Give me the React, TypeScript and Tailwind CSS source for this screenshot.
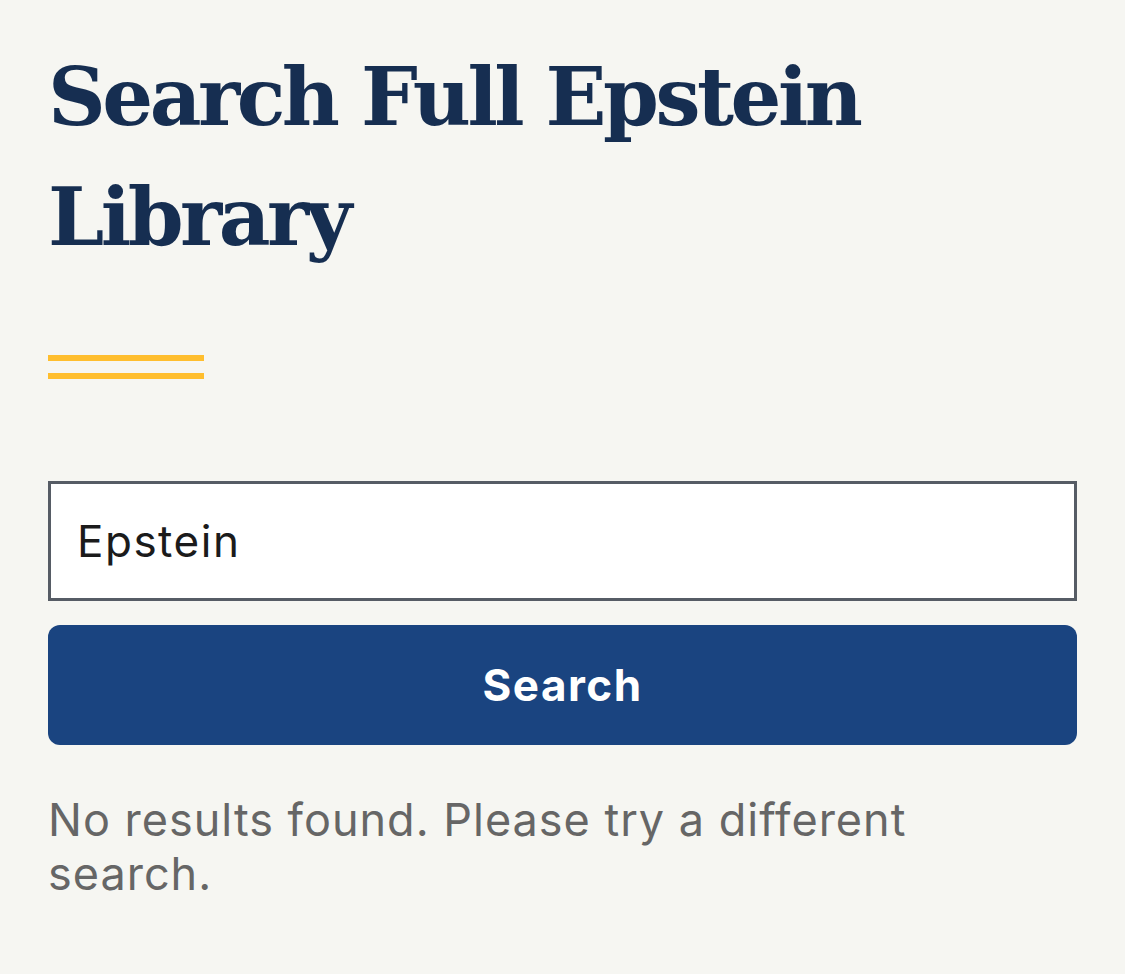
export default function App() {
  return (
    <div className="min-h-[974px] w-full bg-[#f6f6f2] px-[48px] pt-[37px]">
      <h1 className="font-['DejaVu_Serif',serif] text-[80px] font-bold leading-[120px] tracking-[-3.5px] text-[#162e51]">
        Search Full Epstein Library
      </h1>
      <div className="mt-[78px] flex w-[156px] flex-col gap-[12px]">
        <div className="h-[6px] bg-[#ffbe2e]" />
        <div className="h-[6px] bg-[#ffbe2e]" />
      </div>
      <form className="mt-[102px] flex flex-col gap-[24px]" onSubmit={(e) => e.preventDefault()}>
        <input
          type="text"
          defaultValue="Epstein"
          className="h-[120px] w-full border-[3px] border-[#565c65] bg-white px-[26px] font-['Inter',sans-serif] text-[44px] tracking-[1.5px] text-[#1b1b1b] outline-none"
        />
        <button
          type="submit"
          className="h-[120px] w-full rounded-[12px] bg-[#1a4480] font-['Inter',sans-serif] text-[44px] font-bold tracking-[1.5px] text-white"
        >
          Search
        </button>
      </form>
      <p className="mt-[48px] max-w-[940px] font-['Inter',sans-serif] text-[45px] leading-[54px] tracking-[1px] text-[#666666]">
        No results found. Please try a different search.
      </p>
    </div>
  );
}
